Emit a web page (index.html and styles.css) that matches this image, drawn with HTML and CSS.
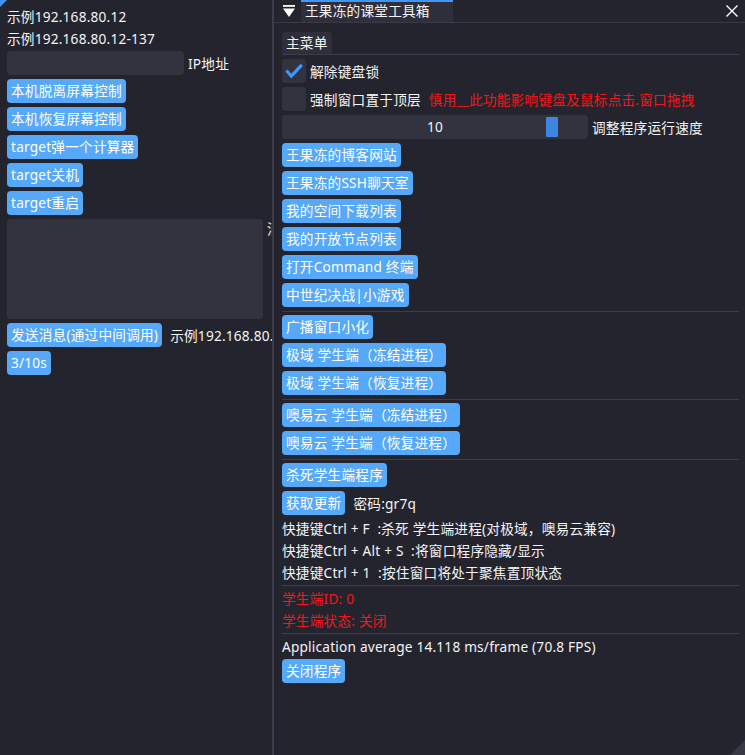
FILE: index.html
```html
<!DOCTYPE html>
<html lang="zh-CN">
<head>
<meta charset="utf-8">
<title>王果冻的课堂工具箱</title>
<link rel="stylesheet" href="styles.css">
</head>
<body>
<div class="app">
  <div class="left">
    <span class="corner"></span>
    <div class="txt">示例192.168.80.12</div>
    <div class="txt">示例192.168.80.12-137</div>
    <div class="row inner">
      <div class="input"></div>
      <span class="txt">IP地址</span>
    </div>
    <div class="row"><button class="btn">本机脱离屏幕控制</button></div>
    <div class="row"><button class="btn">本机恢复屏幕控制</button></div>
    <div class="row"><button class="btn">target弹一个计算器</button></div>
    <div class="row"><button class="btn">target关机</button></div>
    <div class="row"><button class="btn">target重启</button></div>
    <div class="row inner top">
      <div class="multiline"></div>
      <span class="txt">消息内容</span>
    </div>
    <div class="row">
      <button class="btn">发送消息(通过中间调用)</button>
      <span class="txt nowrap">示例192.168.80.12</span>
    </div>
    <div class="row"><button class="btn">3/10s</button></div>
  </div>
  <div class="divider"></div>
  <div class="win">
    <div class="titlebar">
      <span class="collapse">
        <svg width="12" height="12" viewBox="0 0 12 12"><rect x="0" y="0" width="12" height="1.8" fill="#fff"/><polygon points="0,3.4 12,3.4 6,12" fill="#fff"/></svg>
      </span>
      <span class="title-tab">王果冻的课堂工具箱</span>
      <span class="close">
        <svg width="12" height="12" viewBox="0 0 12 12"><path d="M0.5 0.5 L11.5 11.5 M11.5 0.5 L0.5 11.5" stroke="#fff" stroke-width="1.4" fill="none"/></svg>
      </span>
    </div>
    <div class="content">
      <div class="tabbar"><span class="tab">主菜单</span></div>
      <div class="row inner">
        <span class="checkbox">
          <svg width="24" height="24" viewBox="0 0 24 24"><polyline points="4.5,11.5 9.3,17.2 19.8,5.8" fill="none" stroke="#4296fa" stroke-width="3.2" stroke-linecap="butt" stroke-linejoin="miter"/></svg>
        </span>
        <span class="txt">解除键盘锁</span>
      </div>
      <div class="row">
        <div class="row inner"><span class="checkbox"></span><span class="txt">强制窗口置于顶层</span></div>
        <span class="txt red">慎用__此功能影响键盘及鼠标点击.窗口拖拽</span>
      </div>
      <div class="row inner">
        <div class="slider"><span class="slider-val">10</span><span class="grab"></span></div>
        <span class="txt">调整程序运行速度</span>
      </div>
      <div class="row"><button class="btn">王果冻的博客网站</button></div>
      <div class="row"><button class="btn">王果冻的SSH聊天室</button></div>
      <div class="row"><button class="btn">我的空间下载列表</button></div>
      <div class="row"><button class="btn">我的开放节点列表</button></div>
      <div class="row"><button class="btn">打开Command 终端</button></div>
      <div class="row"><button class="btn">中世纪决战|小游戏</button></div>
      <div class="sep"></div>
      <div class="row"><button class="btn">广播窗口小化</button></div>
      <div class="row"><button class="btn">极域 学生端（冻结进程）</button></div>
      <div class="row"><button class="btn">极域 学生端（恢复进程）</button></div>
      <div class="sep"></div>
      <div class="row"><button class="btn">噢易云 学生端（冻结进程）</button></div>
      <div class="row"><button class="btn">噢易云 学生端（恢复进程）</button></div>
      <div class="sep"></div>
      <div class="row"><button class="btn">杀死学生端程序</button></div>
      <div class="row"><button class="btn">获取更新</button><span class="txt">密码:gr7q</span></div>
      <div class="txt pre">快捷键Ctrl + F  :杀死 学生端进程(对极域，噢易云兼容)</div>
      <div class="txt pre">快捷键Ctrl + Alt + S  :将窗口程序隐藏/显示</div>
      <div class="txt pre">快捷键Ctrl + 1  :按住窗口将处于聚焦置顶状态</div>
      <div class="sep"></div>
      <div class="txt red">学生端ID: 0</div>
      <div class="txt red">学生端状态: 关闭</div>
      <div class="sep"></div>
      <div class="txt">Application average 14.118 ms/frame (70.8 FPS)</div>
      <div class="row"><button class="btn">关闭程序</button></div>
    </div>
    <span class="grip"></span>
  </div>
</div>
</body>
</html>
```

FILE: styles.css
```css
* { box-sizing: border-box; }
html, body {
  margin: 0;
  padding: 0;
  background: #24242f;
  width: 745px;
  height: 755px;
  overflow: hidden;
}
body {
  font-family: "Noto Sans", "Noto Sans CJK SC", sans-serif;
  font-size: 13.66px;
  line-height: 18px;
  letter-spacing: 0.2px;
  color: #f4f4f4;
}
.app {
  display: flex;
  width: 745px;
  height: 755px;
}
.left {
  position: relative;
  width: 272px;
  flex: none;
  padding: 7px 0 0 7px;
  display: flex;
  flex-direction: column;
  gap: 4px;
  overflow: hidden;
}
.corner {
  position: absolute;
  left: 0;
  top: 0;
  width: 0;
  height: 0;
  border-top: 7px solid #4296fa;
  border-right: 7px solid transparent;
}
.divider {
  width: 2px;
  flex: none;
  background: #3c3c4a;
}
.txt {
  display: block;
  height: 18px;
  padding-top: 1px;
  white-space: nowrap;
}
.pre { white-space: pre; }
.nowrap { white-space: nowrap; }
.red { color: #f01818; }
.row {
  display: flex;
  align-items: center;
  gap: 8px;
  white-space: nowrap;
}
.row.inner { gap: 4px; }
.row.top { align-items: flex-start; }
.btn {
  font: inherit;
  letter-spacing: inherit;
  color: #ffffff;
  background: #56a8f8;
  border: none;
  border-radius: 4px;
  height: 24px;
  padding: 0 4px;
  line-height: 24px;
  white-space: nowrap;
  flex: none;
}
.input {
  width: 177px;
  height: 24px;
  background: #33333f;
  border-radius: 4px;
  flex: none;
}
.multiline {
  width: 256px;
  height: 100px;
  background: #33333f;
  border-radius: 4px;
  flex: none;
}
.win {
  position: relative;
  flex: 1;
  display: flex;
  flex-direction: column;
  min-width: 0;
}
.titlebar {
  height: 23px;
  flex: none;
  display: flex;
  align-items: stretch;
  border-bottom: 1px solid #3a3a47;
}
.collapse {
  width: 27px;
  flex: none;
  padding: 5px 0 0 9px;
  display: block;
}
.collapse svg { display: block; }
.title-tab {
  position: relative;
  width: 152px;
  flex: none;
  background: #2f2f3b;
  padding: 2px 0 0 4px;
  line-height: 18px;
  white-space: nowrap;
}
.title-tab::before {
  content: "";
  position: absolute;
  left: 0;
  right: 0;
  top: 0;
  height: 2px;
  background: #4296fa;
}
.close {
  margin-left: auto;
  padding: 5px 7px 0 0;
}
.close svg { display: block; }
.content {
  padding: 9px 6px 0 8px;
  display: flex;
  flex-direction: column;
  gap: 4px;
}
.tabbar {
  display: flex;
  border-bottom: 1px solid #3c3c4a;
  height: 23px;
}
.tab {
  background: #2f2f3b;
  border-radius: 4px 4px 0 0;
  height: 22px;
  line-height: 22px;
  padding: 0 5px 0 4px;
  width: 50px;
  white-space: nowrap;
}
.checkbox {
  width: 24px;
  height: 24px;
  border-radius: 4px;
  background: #33333f;
  flex: none;
  display: block;
}
.checkbox svg { display: block; }
.slider {
  position: relative;
  width: 306px;
  height: 24px;
  background: #33333f;
  border-radius: 4px;
  flex: none;
  display: flex;
  align-items: center;
  justify-content: center;
}
.slider-val { line-height: 18px; }
.grab {
  position: absolute;
  left: 264px;
  top: 2px;
  width: 12px;
  height: 20px;
  background: #3d85e0;
  border-radius: 1px;
}
.sep {
  height: 1px;
  background: #3c3c4a;
  margin-bottom: -1px;
  flex: none;
}
.grip {
  position: absolute;
  right: 0;
  bottom: 0;
  width: 0;
  height: 0;
  border-bottom: 15px solid #383845;
  border-left: 15px solid transparent;
}
```
